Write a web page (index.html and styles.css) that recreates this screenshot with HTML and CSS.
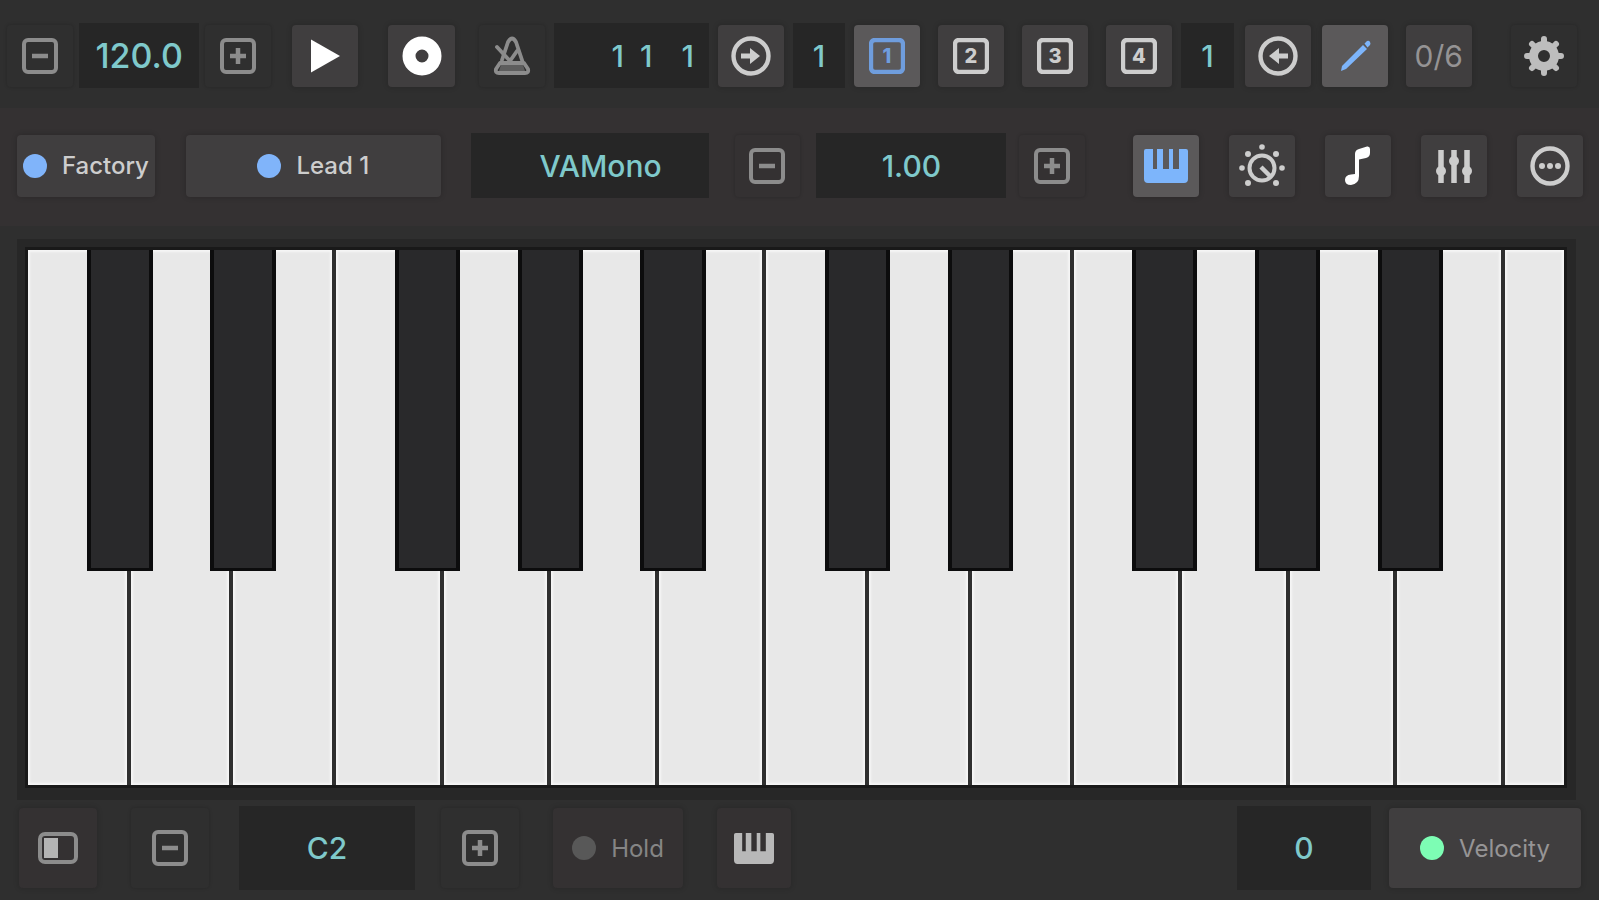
FILE: index.html
```html
<!DOCTYPE html>
<html lang="en">
<head>
<meta charset="utf-8">
<meta name="viewport" content="width=device-width, initial-scale=1">
<title>VAMono keyboard</title>
<link rel="stylesheet" href="styles.css">
</head>
<body>
<svg class="defs" aria-hidden="true">
  <symbol id="i-minus" viewBox="0 0 36 36"><rect x="2" y="2" width="32" height="32" rx="4" fill="none" stroke="currentColor" stroke-width="4"/><path d="M10 18h16" stroke="currentColor" stroke-width="4.500"/></symbol>
  <symbol id="i-plus" viewBox="0 0 36 36"><rect x="2" y="2" width="32" height="32" rx="4" fill="none" stroke="currentColor" stroke-width="4"/><path d="M10 18h16M18 10v16" stroke="currentColor" stroke-width="4.500"/></symbol>
  <symbol id="i-frame" viewBox="0 0 36 36"><rect x="2" y="2" width="32" height="32" rx="4" fill="none" stroke="currentColor" stroke-width="4.400"/></symbol>
  <symbol id="i-keys" viewBox="0 0 44 34"><path fill="currentColor" d="M0 2q0-2 2-2h7v20h4V0h6v20h6V0h4v20h6V0h7q2 0 2 2v28q0 4-4 4H4q-4 0-4-4z"/><path fill="currentColor" opacity=".35" d="M13 0h6v20h-6z"/></symbol>
</svg>
<main class="app">
  <header class="bar bar-transport">
    <button class="btn ghost" aria-label="Tempo down"><svg class="icon"><use href="#i-minus"/></svg></button>
    <output class="display tempo gap-6">120.0</output>
    <button class="btn ghost gap-6" aria-label="Tempo up"><svg class="icon"><use href="#i-plus"/></svg></button>
    <button class="btn solid white gap-21" aria-label="Play"><svg class="icon" viewBox="0 0 36 36"><path d="M4 1.500 33 18 4 34.500z" fill="currentColor"/></svg></button>
    <button class="btn solid white gap-30" aria-label="Record"><svg class="icon wide" viewBox="0 0 40 40"><circle cx="20" cy="20" r="13" fill="none" stroke="currentColor" stroke-width="13"/></svg></button>
    <button class="btn ghost gap-24" aria-label="Metronome"><svg class="icon wide" viewBox="0 0 40 40"><g fill="none" stroke="currentColor" stroke-width="3.800" stroke-linejoin="round" stroke-linecap="round"><path d="M10 24 16 6q4-7 8 0l7 21M8 27h24l4 6q1 4-3 4H7q-4 0-3-4z"/><path d="M5 11 18 25 25 15"/></g><path d="M9 29h22l2 6H7z" fill="currentColor" opacity=".5"/></svg></button>
    <output class="display position gap-9"><span>1</span><span>1</span><span class="tick">1</span></output>
    <button class="btn solid gap-9" aria-label="Next bar"><svg class="icon wide" viewBox="0 0 40 40"><circle cx="20" cy="20" r="17.500" fill="none" stroke="currentColor" stroke-width="4.400"/><path d="M10 17.500h9V12l10 8-10 8v-5.500h-9z" fill="currentColor"/></svg></button>
    <output class="display count gap-9">1</output>
    <button class="btn solid active gap-9" aria-pressed="true"><svg class="icon" viewBox="0 0 36 36"><use href="#i-frame"/><text class="icon-num" x="18" y="25">1</text></svg></button>
    <button class="btn solid gap-18"><svg class="icon" viewBox="0 0 36 36"><use href="#i-frame"/><text class="icon-num" x="18" y="25">2</text></svg></button>
    <button class="btn solid gap-18"><svg class="icon" viewBox="0 0 36 36"><use href="#i-frame"/><text class="icon-num" x="18" y="25">3</text></svg></button>
    <button class="btn solid gap-18"><svg class="icon" viewBox="0 0 36 36"><use href="#i-frame"/><text class="icon-num" x="18" y="25">4</text></svg></button>
    <output class="display count gap-9">1</output>
    <button class="btn solid gap-11" aria-label="Previous bar"><svg class="icon wide" viewBox="0 0 40 40"><circle cx="20" cy="20" r="17.500" fill="none" stroke="currentColor" stroke-width="4.400"/><path d="M30 17.500h-9V12l-10 8 10 8v-5.500h9z" fill="currentColor"/></svg></button>
    <button class="btn solid active draw gap-11" aria-label="Draw" aria-pressed="true"><svg class="icon" viewBox="0 0 36 36"><path d="M4 33 5 28 26 7l4 4L9 31zM27.500 5.500 30 3q2-1 3 1t0 3l-2.500 2.500z" fill="currentColor"/></svg></button>
    <button class="btn solid counter gap-18">0/6</button>
    <button class="btn ghost gear gap-39" aria-label="Settings"><svg class="icon wide" viewBox="0 0 40 40"><circle cx="20" cy="20" r="10.500" fill="none" stroke="currentColor" stroke-width="9"/><path d="M20 3v6M20 31v6M3 20h6M31 20h6M8 8l5 5M27 27l5 5M32 8l-5 5M13 27l-5 5" stroke="currentColor" stroke-width="6" stroke-linecap="round"/></svg></button>
  </header>

  <nav class="bar bar-patch" aria-label="Patch">
    <button class="btn solid bank"><span class="dot"></span>Factory</button>
    <button class="btn solid preset gap-31"><span class="dot"></span>Lead 1</button>
    <output class="display engine gap-30">VAMono</output>
    <button class="btn ghost gap-26" aria-label="Value down"><svg class="icon"><use href="#i-minus"/></svg></button>
    <output class="display value gap-16">1.00</output>
    <button class="btn ghost gap-13" aria-label="Value up"><svg class="icon"><use href="#i-plus"/></svg></button>
    <button class="btn solid active keys gap-48" aria-label="Keyboard" aria-pressed="true"><svg class="icon piano-icon"><use href="#i-keys"/></svg></button>
    <button class="btn solid gap-30" aria-label="Controls"><svg class="icon dial" viewBox="0 0 46 46"><circle cx="23" cy="25" r="12.500" fill="none" stroke="currentColor" stroke-width="4"/><path d="m22 24 9 9" stroke="currentColor" stroke-width="4.500"/><g fill="currentColor"><circle cx="23" cy="4" r="2.800"/><circle cx="9" cy="11" r="3"/><circle cx="37" cy="11" r="3"/><circle cx="3" cy="25" r="2.800"/><circle cx="43" cy="25" r="2.800"/><circle cx="9" cy="40" r="3"/><circle cx="37" cy="40" r="3"/></g></svg></button>
    <button class="btn solid white gap-30" aria-label="Notes"><svg class="icon wide" viewBox="0 0 40 40"><path d="M17 28V8q0-4 4-5l8-2.500q3-.5 3 2.500v4q0 4-4 5l-7 1.500V30q0 8-8 9-6 0-6-5t6-5.500z" fill="currentColor"/></svg></button>
    <button class="btn solid gap-30" aria-label="Mixer"><svg class="icon" viewBox="0 0 36 36"><path d="M5 2v33M18 2v33M31 2v33" stroke="currentColor" stroke-width="5.500"/><g fill="currentColor"><circle cx="5" cy="23" r="5"/><circle cx="18" cy="13" r="5"/><circle cx="31" cy="23" r="5"/></g></svg></button>
    <button class="btn solid gap-30" aria-label="More"><svg class="icon wide" viewBox="0 0 40 40"><circle cx="20" cy="20" r="17.500" fill="none" stroke="currentColor" stroke-width="4.400"/><g fill="currentColor"><circle cx="12" cy="20" r="3"/><circle cx="20" cy="20" r="3"/><circle cx="28" cy="20" r="3"/></g></svg></button>
  </nav>

  <section class="piano" aria-label="Piano keyboard">
    <div class="whites">
      <button class="white-key" aria-label="C2"></button><button class="white-key" aria-label="D2"></button><button class="white-key" aria-label="E2"></button><button class="white-key fb" aria-label="F2"></button><button class="white-key fb" aria-label="G2"></button><button class="white-key fb" aria-label="A2"></button><button class="white-key fb" aria-label="B2"></button>
      <button class="white-key" aria-label="C3"></button><button class="white-key" aria-label="D3"></button><button class="white-key" aria-label="E3"></button><button class="white-key fb" aria-label="F3"></button><button class="white-key fb" aria-label="G3"></button><button class="white-key fb" aria-label="A3"></button><button class="white-key fb" aria-label="B3"></button>
      <button class="white-key top-c" aria-label="C4"></button>
    </div>
    <div class="blacks">
      <button class="black-key semi-2" aria-label="C sharp 2"></button>
      <button class="black-key semi-4" aria-label="D sharp 2"></button>
      <button class="black-key semi-7" aria-label="F sharp 2"></button>
      <button class="black-key semi-9" aria-label="G sharp 2"></button>
      <button class="black-key semi-11" aria-label="A sharp 2"></button>
      <button class="black-key semi-14" aria-label="C sharp 3"></button>
      <button class="black-key semi-16" aria-label="D sharp 3"></button>
      <button class="black-key semi-19" aria-label="F sharp 3"></button>
      <button class="black-key semi-21" aria-label="G sharp 3"></button>
      <button class="black-key semi-23" aria-label="A sharp 3"></button>
    </div>
  </section>

  <footer class="bar bar-octave">
    <button class="btn dim" aria-label="Toggle panel"><svg class="icon wide" viewBox="0 0 40 40"><rect x="2" y="6" width="36" height="28" rx="5" fill="none" stroke="currentColor" stroke-width="4"/><path d="M6 10h14v20H6z" fill="#b4b4b4"/></svg></button>
    <button class="btn ghost gap-34" aria-label="Octave down"><svg class="icon"><use href="#i-minus"/></svg></button>
    <output class="display octave gap-30">C2</output>
    <button class="btn ghost gap-26" aria-label="Octave up"><svg class="icon"><use href="#i-plus"/></svg></button>
    <button class="btn dim hold gap-34"><span class="dot off"></span>Hold</button>
    <button class="btn dim layout gap-34" aria-label="Keyboard layout"><svg class="icon piano-small"><use href="#i-keys"/></svg></button>
    <output class="display level">0</output>
    <button class="btn solid velocity gap-18"><span class="dot on"></span>Velocity</button>
  </footer>
</main>
</body>
</html>
```
FILE: styles.css
```css
* { box-sizing: border-box; }

body {
  margin: 0;
  background: #2f2f2f;
  font-family: Inter, "Liberation Sans", sans-serif;
}

.defs { position: absolute; width: 0; height: 0; }

.app {
  display: flex;
  flex-direction: column;
  min-height: 100vh;
}

.bar { display: flex; align-items: center; }
.bar-transport { padding: 23px 22px 20px 7px; background: #2f2f2f; }
.bar-patch { padding: 25px 16px 28px 17px; background: #343132; }
.bar-octave { padding: 6px 18px 10px 19px; }

/* Controls share the row in proportion to their base widths. */
.btn, .display {
  display: flex;
  align-items: center;
  justify-content: center;
  min-width: 0;
  border: 0;
  padding: 0;
  font-family: inherit;
}

.btn {
  flex: 66 1 66px;
  height: 62px;
  border-radius: 4px;
  color: #8c8c8c;
  font-size: 24px;
  font-weight: 500;
  white-space: nowrap;
}

.ghost { background: transparent; box-shadow: 0 0 3px 1px rgba(0, 0, 0, .12); }
.solid { background: #403e3f; color: #cdcdcd; box-shadow: 0 0 5px 1px rgba(0, 0, 0, .15); }
.dim { background: #343132; box-shadow: 0 0 5px 1px rgba(0, 0, 0, .15); }
.white { color: #fff; }
.gear { color: #bdbdbd; }
.active { background: #5b595a; color: #6f9ddd; }
.keys, .draw { color: #7db5fb; }
.counter { color: #959394; font-size: 30px; font-weight: 400; }

.display {
  height: 65px;
  background: #262626;
  color: #7fc9cb;
  font-size: 30px;
  font-weight: 500;
}

.tempo { flex: 120 1 120px; font-size: 34px; }
.position { flex: 155 1 155px; justify-content: flex-end; gap: 16px; padding-right: 15px; }
.tick { margin-left: 13px; }
.count { flex: 52 1 52px; }
.bank { flex: 138 1 138px; gap: 15px; }
.preset { flex: 255 1 255px; gap: 15px; }
.engine { flex: 238 1 238px; padding-left: 22px; }
.value { flex: 190 1 190px; }

.gap-6 { margin-left: 6px; }
.gap-9 { margin-left: 9px; }
.gap-11 { margin-left: 11px; }
.gap-13 { margin-left: 13px; }
.gap-16 { margin-left: 16px; }
.gap-18 { margin-left: 18px; }
.gap-21 { margin-left: 21px; }
.gap-24 { margin-left: 24px; }
.gap-26 { margin-left: 26px; }
.gap-30 { margin-left: 30px; }
.gap-31 { margin-left: 31px; }
.gap-34 { margin-left: 34px; }
.gap-39 { margin-left: 39px; }
.gap-48 { margin-left: 48px; }

.icon { width: 36px; height: 36px; flex: none; }
.wide { width: 40px; height: 40px; }
.dial { width: 46px; height: 46px; }
.piano-icon { width: 44px; height: 34px; }
.piano-small { width: 40px; height: 31px; color: #b8b8b8; }
.icon-num { fill: currentColor; font-size: 20px; font-weight: 800; text-anchor: middle; }

.dot { flex: none; width: 24px; height: 24px; border-radius: 50%; background: #80b4fa; }
.off { background: #585858; }
.on { background: #7dfdb4; }

/* Keyboard: white and black keys are two layers in one grid cell. */
.piano {
  flex: 1;
  display: grid;
  margin: 13px 23px 0 17px;
  padding: 11px 12px 15px 11px;
  background: #272727;
}

.whites, .blacks { grid-area: 1 / 1; }

.whites {
  display: flex;
  gap: 4px;
  background: #2f2f2f;
  box-shadow: 0 0 0 3px #191919;
}

.white-key {
  flex: 20 1 0;
  min-width: 0;
  border: 0;
  padding: 0;
  background: #e8e8e8;
  box-shadow: inset 0 0 2px 2px #f6f6f6;
}
.fb { flex-grow: 21; }
.top-c { flex-grow: 12; }

.blacks {
  display: grid;
  grid-template-columns: repeat(25, minmax(0, 1fr));
  grid-template-rows: 60% 40%;
  pointer-events: none;
}

.black-key {
  grid-row: 1;
  margin: 0 -2px;
  border: solid #0c0c0d;
  border-width: 0 4px 3px;
  padding: 0;
  background: #29292b;
  pointer-events: auto;
}
.semi-2 { grid-column: 2; }
.semi-4 { grid-column: 4; }
.semi-7 { grid-column: 7; }
.semi-9 { grid-column: 9; }
.semi-11 { grid-column: 11; }
.semi-14 { grid-column: 14; }
.semi-16 { grid-column: 16; }
.semi-19 { grid-column: 19; }
.semi-21 { grid-column: 21; }
.semi-23 { grid-column: 23; }

.bar-octave .btn { flex: 0 1 78px; height: 80px; font-weight: 400; }
.bar-octave .display { height: 84px; }
.bar-octave .octave { flex: 0 1 176px; }
.bar-octave .hold { flex-basis: 130px; gap: 15px; color: #858585; }
.bar-octave .layout { flex-basis: 74px; }
.bar-octave .level { flex: 0 1 134px; margin-left: auto; }
.bar-octave .velocity { flex-basis: 192px; gap: 15px; color: #969495; }
```
